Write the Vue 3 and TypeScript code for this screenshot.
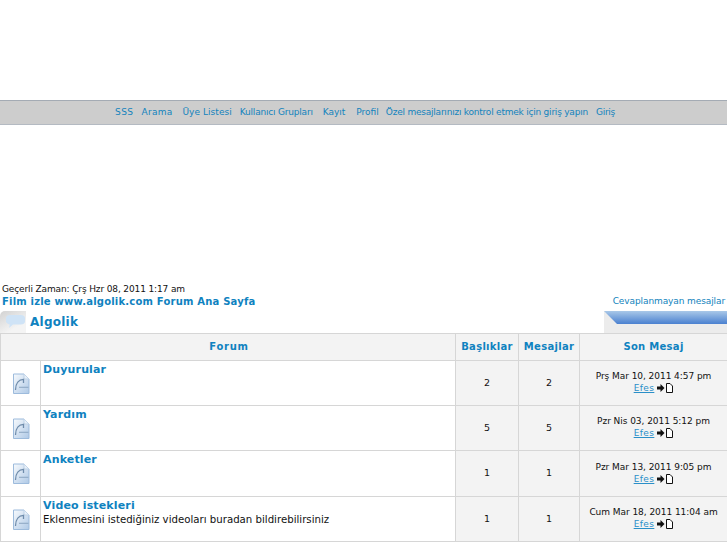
<script setup lang="ts">
interface NavLink {
    label: string
    spacing: number
    gap: number
}

interface ForumRow {
    name: string
    desc?: string
    topics: number
    posts: number
    last: string
}

const navLinks: NavLink[] = [
    { label: 'SSS', spacing: 0.5, gap: 0 },
    { label: 'Arama', spacing: 0.25, gap: 8 },
    { label: 'Üye Listesi', spacing: 0.05, gap: 10 },
    { label: 'Kullanıcı Grupları', spacing: -0.2, gap: 8 },
    { label: 'Kayıt', spacing: 0, gap: 10 },
    { label: 'Profil', spacing: 0, gap: 11 },
    { label: 'Özel mesajlarınızı kontrol etmek için giriş yapın', spacing: -0.22, gap: 7 },
    { label: 'Giriş', spacing: -0.25, gap: 8 },
]

const forums: ForumRow[] = [
    { name: 'Duyurular', topics: 2, posts: 2, last: 'Prş Mar 10, 2011 4:57 pm' },
    { name: 'Yardım', topics: 5, posts: 5, last: 'Pzr Nis 03, 2011 5:12 pm' },
    { name: 'Anketler', topics: 1, posts: 1, last: 'Pzr Mar 13, 2011 9:05 pm' },
    { name: 'Video istekleri', desc: 'Eklenmesini istediğiniz videoları buradan bildirebilirsiniz', topics: 1, posts: 1, last: 'Cum Mar 18, 2011 11:04 am' },
]
</script>

<template>
    <div class="page">
        <div class="top-space"></div>
        <nav class="navbar">
            <a
                v-for="link in navLinks"
                :key="link.label"
                class="nav-link"
                :style="{ letterSpacing: link.spacing + 'px', marginLeft: link.gap + 'px' }"
            >{{ link.label }}</a>
        </nav>
        <div class="ad-space"></div>

        <div class="time">Geçerli Zaman: Çrş Hzr 08, 2011 1:17 am</div>
        <div class="crumbs">
            <a class="home-link">Film izle www.algolik.com Forum Ana Sayfa</a>
            <a class="unanswered">Cevaplanmayan mesajlar</a>
        </div>

        <div class="cat-row">
            <div class="cat-left">
                <span class="cat-icon">
                    <svg width="26" height="22" viewBox="0 0 26 22">
                        <path d="M6 7c0-1.800 1.800-3 4-3h11c2 0 4 1.200 4 3v3.500c0 1.800-1.800 3-4 3h-8l-4 3.500 .8-3.600c-2-.4-3.800-1.500-3.800-2.900z" fill="#cfe3f6" />
                    </svg>
                </span>
                <span class="cat-title">Algolik</span>
            </div>
            <div class="cat-corner">
                <svg class="corner-cut" width="13" height="13" viewBox="0 0 13 13">
                    <path d="M0 0L13 13H0z" fill="#ececec" />
                </svg>
            </div>
        </div>

        <div class="forum-table">
            <div class="th th-forum">Forum</div>
            <div class="th">Başlıklar</div>
            <div class="th">Mesajlar</div>
            <div class="th">Son Mesaj</div>

            <template v-for="f in forums" :key="f.name">
                <div class="td td-icon">
                    <svg width="18" height="21" viewBox="0 0 18 21">
                        <defs>
                            <linearGradient id="docFill" x1="0" y1="0" x2="1" y2="1">
                                <stop offset="0" stop-color="#f7fafd" />
                                <stop offset="1" stop-color="#afc9e6" />
                            </linearGradient>
                        </defs>
                        <path d="M1.500 1h10.500l5 5v14.500h-15.500z" fill="url(#docFill)" stroke="#9dbbdc" />
                        <path d="M12 1v5h5" fill="#e8f0f8" stroke="#bfd2e6" />
                        <path d="M3.500 17C3.500 10 7 6.500 11.500 6.300V10" fill="none" stroke="#6f8cab" stroke-width="1.300" />
                        <path d="M7 14.300h9.500" fill="none" stroke="#8fa9c4" stroke-width="1.100" />
                    </svg>
                </div>
                <div class="td td-name">
                    <a class="forum-name">{{ f.name }}</a>
                    <div v-if="f.desc" class="forum-desc">{{ f.desc }}</div>
                </div>
                <div class="td td-count">{{ f.topics }}</div>
                <div class="td td-count">{{ f.posts }}</div>
                <div class="td td-last">
                    <div class="last-date">{{ f.last }}</div>
                    <div class="last-by">
                        <a class="author">Efes</a>
                        <svg width="16" height="10" viewBox="0 0 16 10">
                            <path d="M0 3.500h3.500V1l4 4-4 4V6.500H0z" fill="#111" />
                            <path d="M9.500 .5h3.500l2.500 2.500v6.500h-6z" fill="#fff" stroke="#111" />
                        </svg>
                    </div>
                </div>
            </template>
        </div>
    </div>
</template>

<style scoped>
.page {
    width: 727px;
    height: 545px;
    overflow: hidden;
    background: #fff;
    font-family: "DejaVu Sans", sans-serif;
    font-size: 10px;
    color: #111;
}
.top-space {
    height: 100px;
}
.navbar {
    border-top: 1px solid #a4abb4;
    border-bottom: 1px solid #b4bac2;
    background: #cdcdcd;
    display: flex;
    justify-content: center;
    align-items: center;
    padding: 0 0 2px 3px;
    height: 21px;
}
.nav-link {
    font-size: 9px;
    color: #1283bd;
    white-space: nowrap;
}
.ad-space {
    height: 157px;
}
.time {
    padding: 1px 0 0 2px;
    height: 11px;
    line-height: 12px;
    font-size: 9px;
    letter-spacing: -0.13px;
}
.crumbs {
    display: flex;
    justify-content: space-between;
    align-items: center;
    height: 14px;
    padding: 0 2px;
}
.home-link {
    font-size: 10px;
    font-weight: bold;
    letter-spacing: 0.2px;
    color: #0f82c0;
}
.unanswered {
    font-size: 9px;
    letter-spacing: -0.1px;
    color: #1283bd;
}
.cat-row {
    display: flex;
    justify-content: space-between;
    height: 22px;
    margin-top: 3px;
}
.cat-left {
    display: flex;
    align-items: center;
    gap: 4px;
}
.cat-icon {
    width: 26px;
    height: 22px;
    display: block;
    background: linear-gradient(150deg, #d2d2d2, #f4f4f4 70%);
    border-radius: 5px 0 0 0;
}
.cat-title {
    font-size: 12px;
    font-weight: bold;
    letter-spacing: 0.25px;
    color: #0f82c0;
}
.cat-corner {
    position: relative;
    width: 123px;
    background: #ececec;
    overflow: hidden;
}
.cat-corner::before {
    content: "";
    display: block;
    height: 13px;
    background: linear-gradient(180deg, #a9c8e8, #4a80d0);
}
.corner-cut {
    position: absolute;
    left: 0;
    top: 0;
}
.forum-table {
    display: grid;
    grid-template-columns: 39px 414px 62px 60px 1fr;
    grid-template-rows: 26px 44px 44px 45px 44px;
    gap: 1px;
    background: #d6d6d6;
    border: 1px solid #d6d6d6;
    border-right: 0;
}
.th {
    background: #f3f3f3;
    display: flex;
    align-items: center;
    justify-content: center;
    font-size: 10px;
    font-weight: bold;
    letter-spacing: 0.3px;
    color: #0f82c0;
    padding-bottom: 2px;
}
.th-forum {
    grid-column: 1 / span 2;
    letter-spacing: 0.7px;
    padding-left: 2px;
}
.td {
    background: #fff;
}
.td-icon {
    display: flex;
    align-items: center;
    justify-content: center;
}
.td-name {
    padding: 2px 2px;
}
.forum-name {
    font-size: 11px;
    font-weight: bold;
    letter-spacing: 0.15px;
    color: #0f82c0;
}
.forum-desc {
    font-size: 10.200px;
    margin-top: 2px;
}
.td-count {
    background: #f3f3f3;
    display: flex;
    align-items: center;
    justify-content: center;
    font-size: 9.500px;
    padding-bottom: 2px;
}
.td-last {
    background: #f3f3f3;
    display: flex;
    flex-direction: column;
    justify-content: center;
    align-items: center;
    font-size: 9px;
    line-height: 12px;
    padding-bottom: 2px;
}
.last-date {
    letter-spacing: -0.05px;
}
.last-by {
    display: flex;
    align-items: center;
    gap: 3px;
}
.author {
    color: #2a8fc8;
    letter-spacing: 0.4px;
    text-decoration: underline;
}
</style>
